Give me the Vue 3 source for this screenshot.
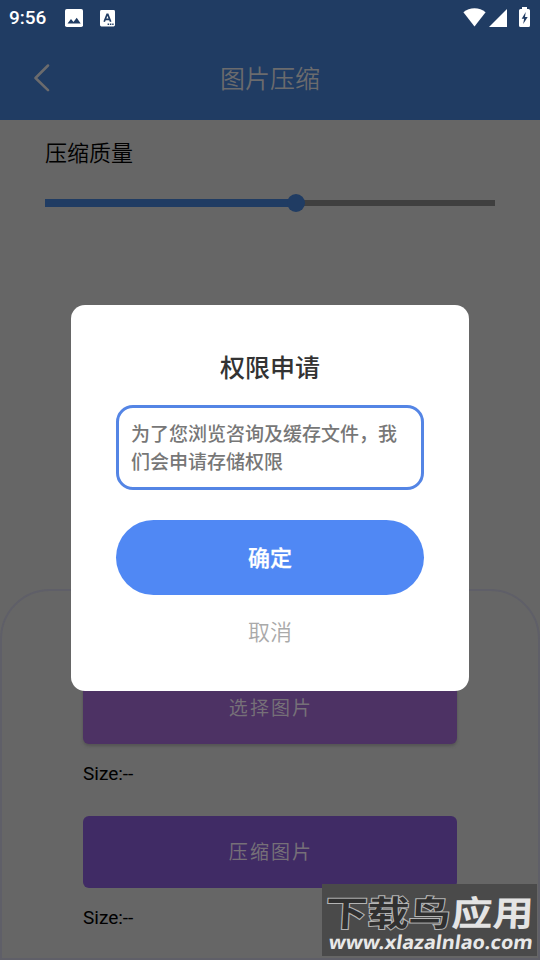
<script setup>
import { ref } from 'vue'

const quality = ref(56)
const tasks = [
  { label: '选择图片', size: 'Size:--', tone: 'pick' },
  { label: '压缩图片', size: 'Size:--', tone: 'compress' },
]
</script>

<template>
  <div class="screen">
    <header class="header">
      <div class="status">
        <span class="clock">9:56</span>
        <svg class="photo" width="18" height="18" viewBox="0 0 18 18">
          <rect width="18" height="18" rx="1.8" fill="#fff" />
          <path d="M2.5 14.6 6 10l2.500 3 3.200-4.200 4 5.800z" fill="#203c63" />
        </svg>
        <svg class="lang" width="15" height="17" viewBox="0 0 15 17">
          <rect width="15" height="16.4" rx="1.4" fill="#fff" />
          <path d="M4.200 11.800 7.100 4.400h.7l2.900 7.400M5.200 9.300h4.500" fill="none" stroke="#203c63" stroke-width="1.700" />
          <path d="M7.600 14.200h1.600m.8 0h1.400m.8 0h1.400" stroke="#203c63" stroke-width="1.400" />
        </svg>
        <div class="signals">
          <svg width="23" height="19" viewBox="0 0 23 19">
            <path d="M.4 4.300C6.500-1 16.500-1 22.600 4.300L11.500 18.500z" fill="#fff" />
          </svg>
          <svg class="cell" width="18" height="18" viewBox="0 0 18 18">
            <path d="M18 0v18H0z" fill="#fff" />
          </svg>
          <svg class="battery" width="11" height="20" viewBox="0 0 11 20">
            <path d="M3 0h5v2h1.500Q11 2 11 3.500v15q0 1.500-1.500 1.500h-8Q0 20 0 18.500v-15Q0 2 1.500 2H3z" fill="#fff" />
            <path d="M6.700 5 2.700 11.700h2.400L4.200 17l4.500-7H6z" fill="#203c63" />
          </svg>
        </div>
      </div>
      <div class="nav">
        <svg class="back" width="16" height="28" viewBox="0 0 16 28">
          <path d="M14 1.500 1.500 14 14 26.200" fill="none" stroke="#6b6b6d" stroke-width="2.500" stroke-linecap="round" stroke-linejoin="round" />
        </svg>
        <h1>图片压缩</h1>
      </div>
    </header>

    <section class="quality">
      <div class="label">压缩质量</div>
      <div class="slider">
        <div class="fill" :style="{ width: quality + '%' }"></div>
        <div class="thumb"></div>
        <div class="rest"></div>
      </div>
    </section>

    <section class="panel">
      <div v-for="task in tasks" :key="task.tone" class="task">
        <button :class="task.tone">{{ task.label }}</button>
        <div class="size">{{ task.size }}</div>
      </div>
    </section>

    <div class="overlay">
      <div class="dialog">
        <h2>权限申请</h2>
        <p>为了您浏览咨询及缓存文件，我们会申请存储权限</p>
        <button class="confirm">确定</button>
        <button class="cancel">取消</button>
      </div>
    </div>

    <svg class="watermark" width="215" height="72" viewBox="0 0 215 72">
      <rect width="215" height="72" fill="#4a4a4a" />
      <g class="brand" transform="translate(3 41.500) skewX(-3)">
        <text class="hollow" x="0" y="0" textLength="125" lengthAdjust="spacingAndGlyphs">下载鸟</text>
        <text class="solid" x="126" y="0" textLength="82" lengthAdjust="spacingAndGlyphs">应用</text>
      </g>
      <g transform="translate(6 65) skewX(-8)">
        <text class="url" x="0" y="0" textLength="204" lengthAdjust="spacingAndGlyphs">www.xlazalnlao.com</text>
      </g>
    </svg>
  </div>
</template>

<style>
body {
  margin: 0;
  background: #666;
}
</style>

<style scoped>
.screen {
  position: relative;
  display: flex;
  flex-direction: column;
  width: 540px;
  height: 960px;
  overflow: hidden;
  background: #666;
  color: #000;
  font-family: Roboto, "Noto Sans CJK SC", sans-serif;
}
.header {
  height: 120px;
  background: #203c63;
}
.status {
  display: flex;
  height: 36px;
  align-items: center;
  padding: 0 10px 0 9px;
}
.clock {
  width: 56px;
  color: #fff;
  font-size: 19px;
  font-weight: 500;
  line-height: 38px;
}
.lang {
  margin-left: 17px;
}
.signals {
  display: flex;
  align-items: center;
  margin-left: auto;
}
.signals svg:first-child {
  margin-top: -2px;
}
.cell {
  margin-left: 3px;
}
.battery {
  margin-left: 12px;
  margin-top: -2px;
}
.nav {
  display: grid;
  grid-template-columns: 50px 1fr 50px;
  align-items: center;
  height: 84px;
}
.back {
  margin-left: 34px;
}
h1 {
  margin: 3px 0 0;
  color: #6b6b6d;
  font-size: 25px;
  font-weight: 350;
  line-height: 36px;
  text-align: center;
}
.quality {
  padding: 17px 45px 0;
}
.label {
  font-size: 22px;
  font-weight: 350;
  line-height: 34px;
}
.slider {
  display: flex;
  height: 18px;
  align-items: center;
  margin-top: 23px;
}
.fill {
  height: 8px;
  background: #203c63;
}
.thumb {
  width: 18px;
  height: 18px;
  flex: none;
  margin: 0 -9px 0 -10px;
  border-radius: 50%;
  background: #203c63;
  z-index: 1;
}
.rest {
  height: 6px;
  flex: 1;
  background: #3f3f3f;
}
.panel {
  display: flex;
  flex-direction: column;
  box-sizing: border-box;
  height: 371px;
  gap: 28px;
  margin-top: auto;
  padding: 81px 81px 0;
  border: 2px solid #5f5f68;
  border-radius: 50px 50px 0 0;
}
button {
  display: block;
  padding: 0;
  border: 0;
  font-family: inherit;
}
.task button {
  width: 374px;
  height: 72px;
  padding: 0 0 3px 2px;
  border-radius: 6px;
  color: #767078;
  font-size: 19px;
  letter-spacing: 2.1px;
}
.task .pick {
  background: #4d3264;
  box-shadow: 0 2px 3px #4448;
}
.task .compress {
  background: #402b65;
}
.size {
  margin-top: 16px;
  font-size: 19px;
  line-height: 28px;
}
.overlay {
  position: absolute;
  inset: 305px 71px auto;
}
.dialog {
  box-sizing: border-box;
  height: 386px;
  padding: 45px 45px 0;
  border-radius: 14px;
  background: #fff;
}
h2 {
  margin: 0;
  color: #333;
  font-size: 25px;
  font-weight: 500;
  line-height: 38px;
  text-align: center;
}
.dialog p {
  box-sizing: border-box;
  height: 85px;
  margin: 17px 0 30px;
  padding: 13px 13px 0 12px;
  border: 3px solid #5485e5;
  border-radius: 17px;
  color: #777;
  font-size: 19px;
  font-weight: 500;
  line-height: 28px;
}
.confirm,
.cancel {
  width: 100%;
  height: 75px;
  font-size: 22px;
}
.confirm {
  padding-bottom: 3px;
  border-radius: 38px;
  background: #5088f4;
  color: #fff;
  font-weight: 500;
  -webkit-text-stroke: 0.3px #fff;
}
.cancel {
  padding-bottom: 5px;
  background: none;
  color: #aaa;
  font-weight: 350;
}
.watermark {
  position: absolute;
  left: 322px;
  top: 884px;
}
.brand {
  font-family: "Noto Sans CJK SC", sans-serif;
  font-size: 35px;
  font-weight: 700;
}
.hollow {
  fill: #303030;
  stroke: #b4b4b4;
  stroke-width: 2px;
  paint-order: stroke;
}
.solid {
  fill: #e4e4e4;
}
.url {
  fill: #e8e8e8;
  font-family: "Noto Sans", sans-serif;
  font-size: 19px;
  font-weight: 700;
}
</style>
